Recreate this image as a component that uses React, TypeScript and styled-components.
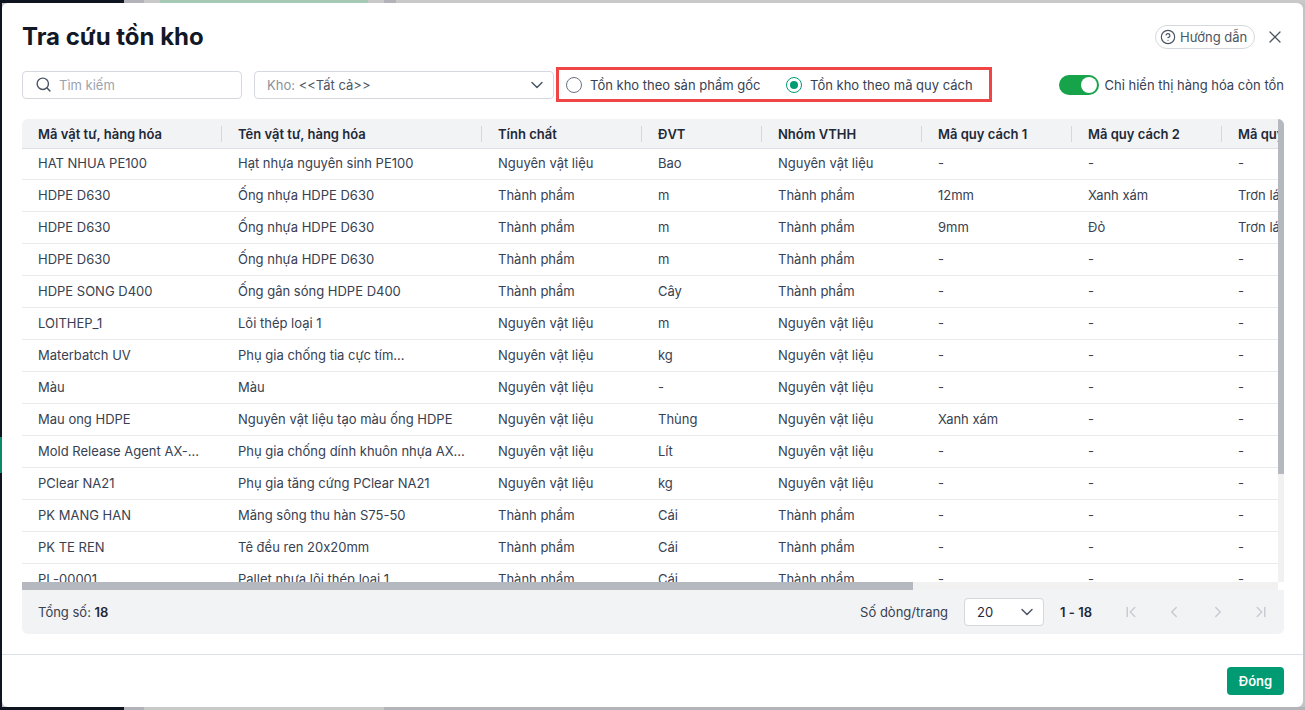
import React from "react";
import styled, { createGlobalStyle } from "styled-components";
import { Search, ChevronDown, X, CircleHelp, ChevronFirst, ChevronLeft, ChevronRight, ChevronLast } from "lucide-react";

const Global = createGlobalStyle`
  html, body { margin: 0; padding: 0; height: 100%; overflow: hidden; }
  body { font-family: Inter, "Noto Sans", sans-serif; font-size: 13px; color: #374151; font-feature-settings: "calt" 0; }
  * { box-sizing: border-box; }
`;

const Page = styled.div`
  width: 1305px;
  height: 710px;
  padding: 3px 2px;
  background:
    linear-gradient(90deg, #0e1420 0 124px, #b2b2b8 124px 144px, #c9c9c9 144px 160px, #a5c9b5 160px 368px, #c9c9c9 368px 384px, #b2b2b8 384px 396px, #c9c9c9 396px) top / 100% 3px no-repeat,
    linear-gradient(90deg, #0e1420 0 124px, #b2b2b8 124px 144px, #c9c9c9 144px 384px, #b3b3b8 384px) bottom / 100% 3px no-repeat,
    linear-gradient(180deg, #0e1420 0 437px, #0c8a68 437px 473px, #0e1420 473px) left / 2px 100% no-repeat,
    #c4c4c6;
`;

const Modal = styled.div`
  display: flex;
  flex-direction: column;
  height: 704px;
  background: #fff;
  border-radius: 6px;
  overflow: hidden;
`;

const Header = styled.header`
  display: flex;
  align-items: center;
  justify-content: space-between;
  height: 32px;
  margin-top: 18px;
  padding: 0 18px 0 20px;
`;

const Title = styled.h1`
  margin: 0;
  font-size: 24px;
  line-height: 32px;
  font-weight: 700;
  color: #111827;
`;

const HeaderActions = styled.div`
  display: flex;
  align-items: center;
  gap: 10px;
  color: #4b5563;
`;

const GuideButton = styled.button`
  display: flex;
  align-items: center;
  gap: 4px;
  width: 100px;
  height: 24px;
  padding: 0 0 0 4px;
  border: 1px solid #d5d8dd;
  border-radius: 12px;
  background: #fff;
  color: #4b5563;
  font: 400 13px Inter, sans-serif;
`;

const Toolbar = styled.div`
  display: flex;
  align-items: center;
  height: 35px;
  margin-top: 14px;
  padding: 0 19px 0 20px;
`;

const SearchBox = styled.div`
  display: flex;
  align-items: center;
  gap: 7px;
  width: 220px;
  height: 28px;
  padding-left: 12px;
  border: 1px solid #d5d8dd;
  border-radius: 4px;
  color: #4b5563;
`;

const Placeholder = styled.span`
  color: #9ca3af;
`;

const StoreSelect = styled.div`
  display: flex;
  align-items: center;
  justify-content: space-between;
  width: 300px;
  height: 28px;
  margin-left: 12px;
  padding: 0 6px 0 12px;
  border: 1px solid #d5d8dd;
  border-radius: 4px;
  color: #4b5563;
`;

const SelectLabel = styled.span`
  color: #8b929c;
`;

const RadioBox = styled.div`
  display: flex;
  align-items: center;
  width: 436px;
  height: 35px;
  margin-left: 2px;
  padding-left: 7px;
  border: 3px solid #f04545;
`;

const RadioOption = styled.label<{ $width: number }>`
  display: flex;
  align-items: center;
  gap: 8px;
  width: ${(p) => p.$width}px;
  color: #374151;
`;

const RadioMark = styled.span<{ $on?: boolean }>`
  display: flex;
  align-items: center;
  justify-content: center;
  width: 16px;
  height: 16px;
  border-radius: 50%;
  border: 1px solid ${(p) => (p.$on ? "#009b72" : "#6b7280")};
  &::after {
    content: "";
    display: ${(p) => (p.$on ? "block" : "none")};
    width: 8px;
    height: 8px;
    border-radius: 50%;
    background: #009b72;
  }
`;

const ToggleWrap = styled.div`
  display: flex;
  align-items: center;
  gap: 5px;
  margin-left: auto;
  color: #374151;
  white-space: nowrap;
`;

const Toggle = styled.span`
  display: flex;
  align-items: center;
  justify-content: flex-end;
  width: 40px;
  height: 20px;
  padding: 0 2px;
  border-radius: 10px;
  background: #16a34a;
  &::after {
    content: "";
    width: 16px;
    height: 16px;
    border-radius: 50%;
    background: #fff;
  }
`;

const TableFrame = styled.div`
  display: grid;
  grid-template-columns: 1fr 6px;
  grid-template-rows: 1fr 8px;
  height: 471px;
  margin: 17px 19px 0 20px;
  border-radius: 6px 6px 0 0;
  overflow: hidden;
`;

const TableClip = styled.div`
  min-width: 0;
  min-height: 0;
  overflow: hidden;
`;

const TableInner = styled.div`
  width: 1770px;
`;

const VerticalTrack = styled.div`
  background: #f1f1f1;
`;

const VerticalThumb = styled.div`
  height: 355px;
  background: #b5b8bf;
`;

const HorizontalTrack = styled.div`
  background: #f1f1f1;
`;

const HorizontalThumb = styled.div`
  width: 891px;
  height: 8px;
  background: #b5b8bf;
`;

const HeadRow = styled.div`
  display: flex;
  height: 30px;
  background: #f2f3f5;
  border-bottom: 1px solid #dcdfe4;
`;

const HeadCell = styled.div<{ $w: number }>`
  position: relative;
  flex: 0 0 ${(p) => p.$w}px;
  padding: 0 16px;
  line-height: 30px;
  font-weight: 600;
  color: #1f2937;
  white-space: nowrap;
  overflow: hidden;
  &::after {
    content: "";
    position: absolute;
    right: 0;
    top: 7px;
    width: 1px;
    height: 16px;
    background: #d5d8dd;
  }
`;

const Row = styled.div`
  display: flex;
  height: 32px;
  line-height: 30px;
  border-bottom: 1px solid #e8e9eb;
  &:nth-child(2) { height: 31px; line-height: 29px; }
`;

const Cell = styled.div<{ $w: number }>`
  flex: 0 0 ${(p) => p.$w}px;
  padding: 0 16px;
  color: #374151;
  white-space: nowrap;
  overflow: hidden;
  text-overflow: ellipsis;
`;

const FooterBar = styled.div`
  display: flex;
  align-items: center;
  height: 44px;
  margin: 0 19px 0 20px;
  padding: 0 0 0 16px;
  background: #f2f3f5;
  border-radius: 0 0 6px 6px;
`;

const Strong = styled.b`
  font-weight: 600;
  color: #1f2937;
`;

const PageSizeLabel = styled.span`
  margin-left: auto;
`;

const PageSize = styled.div`
  display: flex;
  align-items: center;
  justify-content: space-between;
  width: 80px;
  height: 28px;
  margin-left: 16px;
  padding: 0 6px 0 12px;
  border: 1px solid #d5d8dd;
  border-radius: 4px;
  background: #fff;
  color: #1f2937;
`;

const PageRange = styled(Strong)`
  margin-left: 16px;
`;

const Pager = styled.div`
  display: flex;
  align-items: center;
  gap: 25.33px;
  margin: 0 14px 0 30px;
  color: #c8cbd1;
`;

const Bottom = styled.div`
  display: flex;
  justify-content: flex-end;
  margin-top: 20px;
  padding: 12px 19px;
  border-top: 1px solid #dbe1e8;
`;

const CloseButton = styled.button`
  width: 57px;
  height: 28px;
  border: 0;
  border-radius: 4px;
  background: #009b72;
  color: #fff;
  font: 600 13px Inter, sans-serif;
`;

const widths = [200, 260, 160, 120, 160, 150, 150, 150, 150, 150, 120];
const heads = ["Mã vật tư, hàng hóa", "Tên vật tư, hàng hóa", "Tính chất", "ĐVT", "Nhóm VTHH", "Mã quy cách 1", "Mã quy cách 2", "Mã quy cách 3", "Mã quy cách 4", "Mã quy cách 5", "Tồn kho"];

const NVL = "Nguyên vật liệu";
const TP = "Thành phẩm";
const rows: string[][] = [
  ["HAT NHUA PE100", "Hạt nhựa nguyên sinh PE100", NVL, "Bao", NVL, "-", "-", "-"],
  ["HDPE D630", "Ống nhựa HDPE D630", TP, "m", TP, "12mm", "Xanh xám", "Trơn láng"],
  ["HDPE D630", "Ống nhựa HDPE D630", TP, "m", TP, "9mm", "Đỏ", "Trơn láng"],
  ["HDPE D630", "Ống nhựa HDPE D630", TP, "m", TP, "-", "-", "-"],
  ["HDPE SONG D400", "Ống gân sóng HDPE D400", TP, "Cây", TP, "-", "-", "-"],
  ["LOITHEP_1", "Lõi thép loại 1", NVL, "m", NVL, "-", "-", "-"],
  ["Materbatch UV", "Phụ gia chống tia cực tím...", NVL, "kg", NVL, "-", "-", "-"],
  ["Màu", "Màu", NVL, "-", NVL, "-", "-", "-"],
  ["Mau ong HDPE", "Nguyên vật liệu tạo màu ống HDPE", NVL, "Thùng", NVL, "Xanh xám", "-", "-"],
  ["Mold Release Agent AX-...", "Phụ gia chống dính khuôn nhựa AX...", NVL, "Lít", NVL, "-", "-", "-"],
  ["PClear NA21", "Phụ gia tăng cứng PClear NA21", NVL, "kg", NVL, "-", "-", "-"],
  ["PK MANG HAN", "Măng sông thu hàn S75-50", TP, "Cái", TP, "-", "-", "-"],
  ["PK TE REN", "Tê đều ren 20x20mm", TP, "Cái", TP, "-", "-", "-"],
  ["PL-00001", "Pallet nhựa lõi thép loại 1", TP, "Cái", TP, "-", "-", "-"],
];

export default function App() {
  return (
    <Page>
      <Global />
      <Modal>
        <Header>
          <Title>Tra cứu tồn kho</Title>
          <HeaderActions>
            <GuideButton>
              <CircleHelp size={16} strokeWidth={1.75} />
              Hướng dẫn
            </GuideButton>
            <X size={20} strokeWidth={1.5} />
          </HeaderActions>
        </Header>
        <Toolbar>
          <SearchBox>
            <Search size={17} strokeWidth={2} />
            <Placeholder>Tìm kiếm</Placeholder>
          </SearchBox>
          <StoreSelect>
            <span>
              <SelectLabel>Kho: </SelectLabel>&lt;&lt;Tất cả&gt;&gt;
            </span>
            <ChevronDown size={20} strokeWidth={1.75} />
          </StoreSelect>
          <RadioBox>
            <RadioOption $width={220}>
              <RadioMark />
              Tồn kho theo sản phẩm gốc
            </RadioOption>
            <RadioOption $width={190}>
              <RadioMark $on />
              Tồn kho theo mã quy cách
            </RadioOption>
          </RadioBox>
          <ToggleWrap>
            <Toggle />
            Chỉ hiển thị hàng hóa còn tồn
          </ToggleWrap>
        </Toolbar>
        <TableFrame>
          <TableClip>
            <TableInner>
              <HeadRow>
                {heads.map((h, i) => (
                  <HeadCell key={h} $w={widths[i]}>{h}</HeadCell>
                ))}
              </HeadRow>
              {rows.map((r, ri) => (
                <Row key={ri}>
                  {widths.map((w, ci) => (
                    <Cell key={ci} $w={w}>{r[ci] ?? "-"}</Cell>
                  ))}
                </Row>
              ))}
            </TableInner>
          </TableClip>
          <VerticalTrack>
            <VerticalThumb />
          </VerticalTrack>
          <HorizontalTrack>
            <HorizontalThumb />
          </HorizontalTrack>
        </TableFrame>
        <FooterBar>
          <span>
            Tổng số: <Strong>18</Strong>
          </span>
          <PageSizeLabel>Số dòng/trang</PageSizeLabel>
          <PageSize>
            20
            <ChevronDown size={20} strokeWidth={1.75} color="#4b5563" />
          </PageSize>
          <PageRange>1 - 18</PageRange>
          <Pager>
            <ChevronFirst size={18} />
            <ChevronLeft size={18} />
            <ChevronRight size={18} />
            <ChevronLast size={18} />
          </Pager>
        </FooterBar>
        <Bottom>
          <CloseButton>Đóng</CloseButton>
        </Bottom>
      </Modal>
    </Page>
  );
}
